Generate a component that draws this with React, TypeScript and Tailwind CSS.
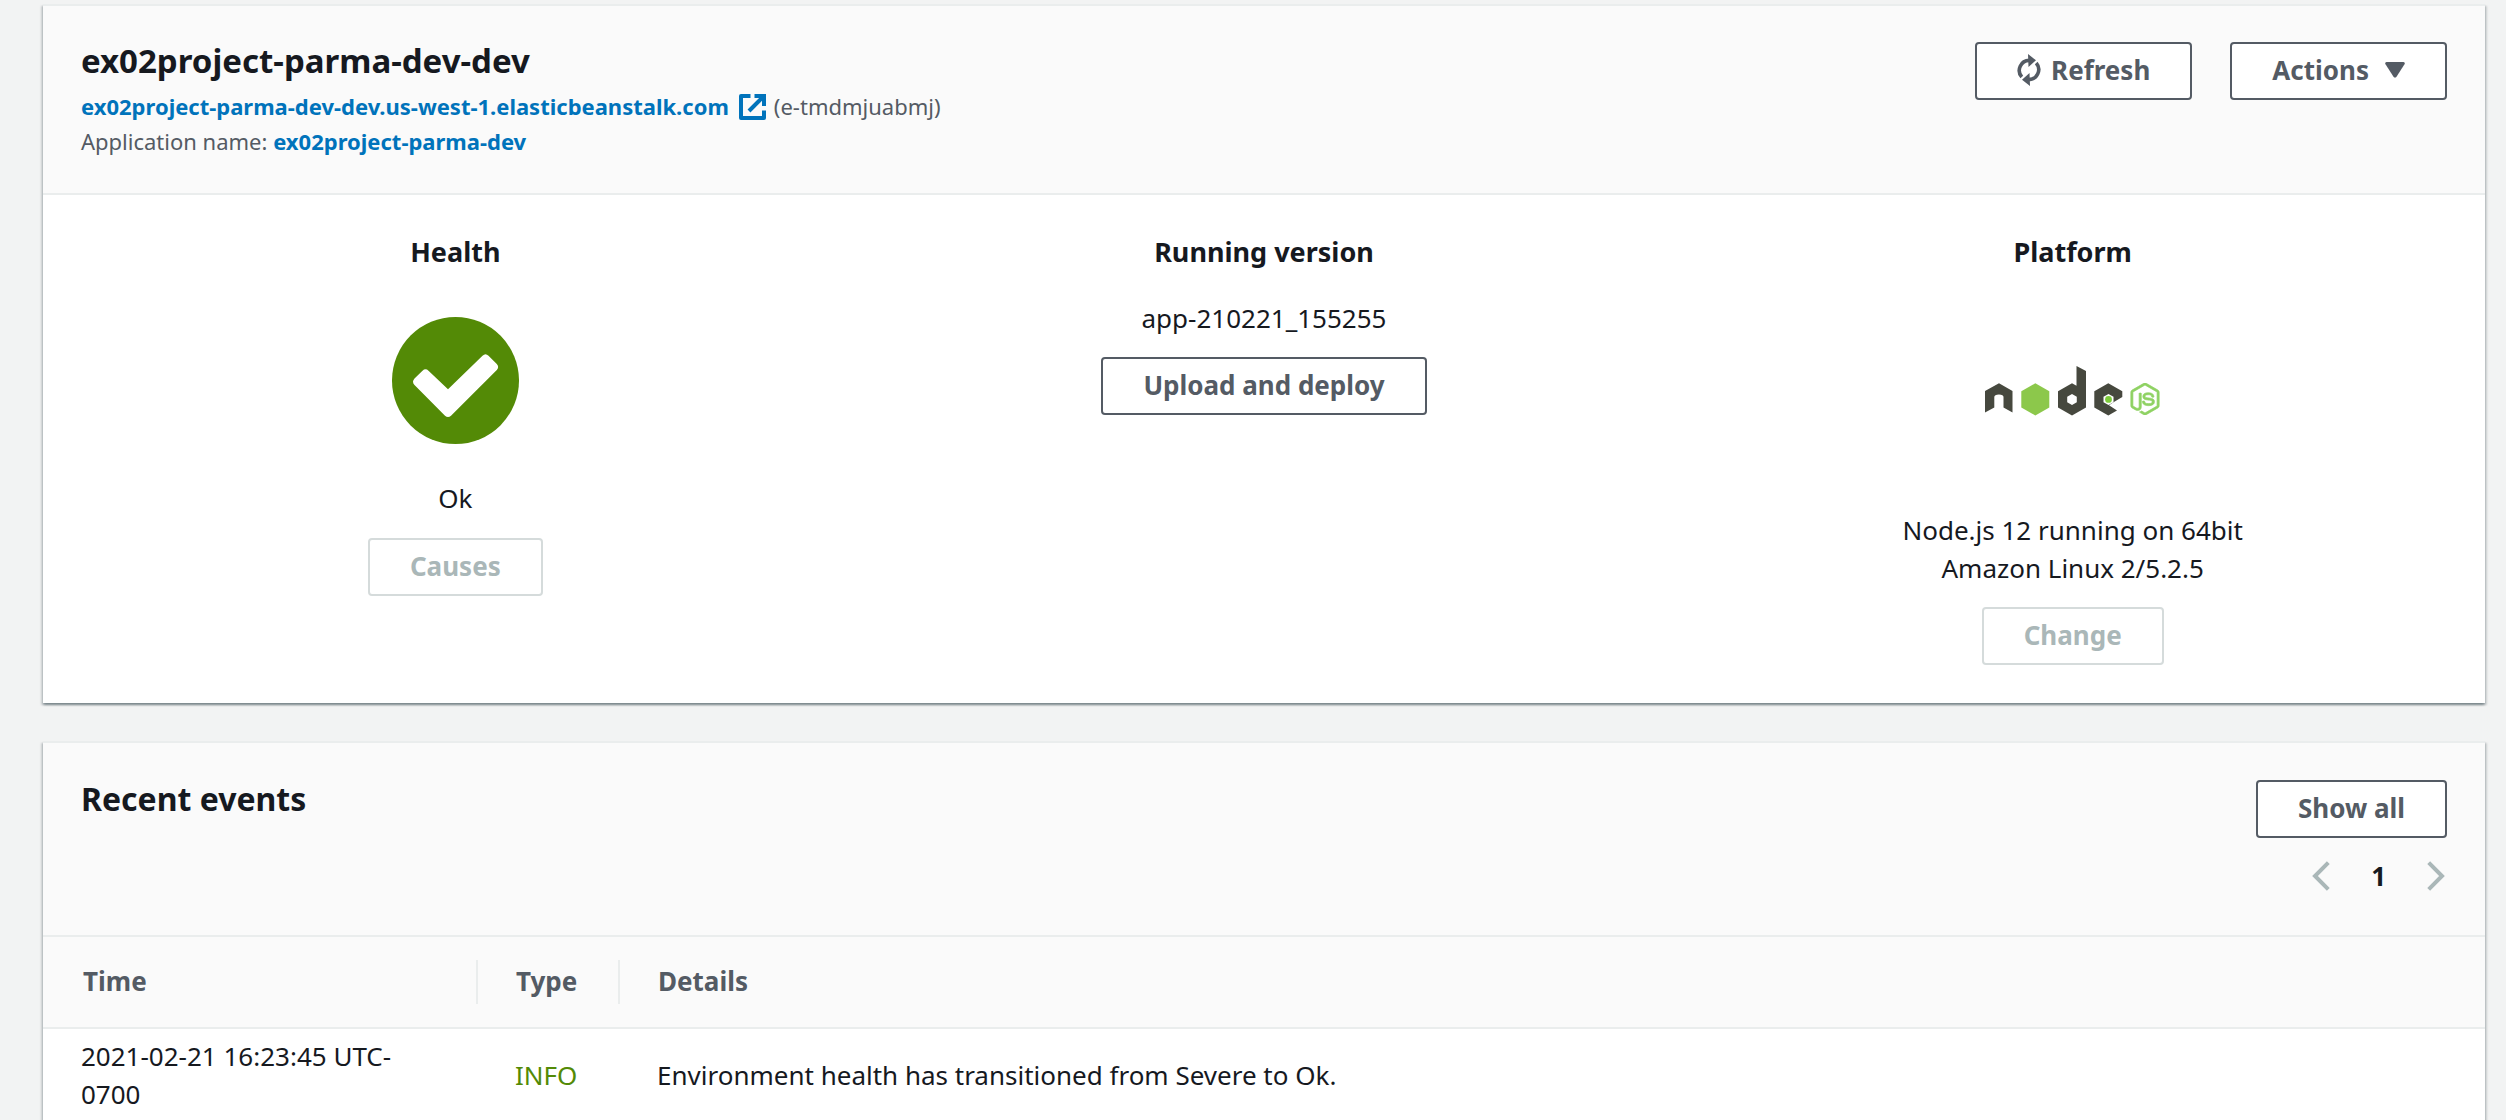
import React from "react";
import { SiNodedotjs } from "react-icons/si";

type ButtonProps = { children: React.ReactNode; disabled?: boolean };

function Button({ children, disabled }: ButtonProps) {
  return (
    <button
      type="button"
      disabled={disabled}
      className="flex h-[58px] items-center rounded border-2 border-[#545b64] bg-white px-10 pb-0.5 text-[26px] leading-[38px] font-bold whitespace-nowrap text-[#545b64] disabled:border-[#d5dbdb] disabled:text-[#aab7b8]"
    >
      {children}
    </button>
  );
}

function Panel({ children, label }: { children: React.ReactNode; label: string }) {
  return (
    <section
      aria-label={label}
      className="border-t-2 border-[#eaeded] bg-white shadow-[0_2px_2px_0_rgba(0,28,36,0.3),2px_2px_2px_0_rgba(0,28,36,0.15),-2px_2px_2px_0_rgba(0,28,36,0.15)]"
    >
      {children}
    </section>
  );
}

function Column({ title, children }: { title: string; children: React.ReactNode }) {
  return (
    <div className="flex flex-col items-center text-center">
      <h2 className="mb-7 text-[27px] leading-[38px] font-bold">{title}</h2>
      {children}
    </div>
  );
}

function ExternalIcon() {
  return (
    <svg className="h-[26px] w-[27px]" viewBox="0 0 27 26" fill="none" stroke="currentColor" aria-hidden="true">
      <path d="M11.5 2H2v22h23v-7.5" strokeWidth="4" strokeLinejoin="round" />
      <path d="M15.5 2H25v10" strokeWidth="4" />
      <path d="M10 17L24 3" strokeWidth="4" />
    </svg>
  );
}

function RefreshIcon() {
  return (
    <svg className="h-8 w-6" viewBox="0 0 24 32" aria-hidden="true">
      <g fill="none" stroke="currentColor" strokeWidth="3.6">
        <path d="M4.800 23A10 10 0 0 1 12.500 6.400" />
        <path d="M19.200 9A10 10 0 0 1 11.500 25.600" />
      </g>
      <path d="M11 0L19 6.300L11.500 13Z M13 32L5 25.700L12.500 19Z" fill="currentColor" />
    </svg>
  );
}

function HealthIcon() {
  return (
    <svg className="size-[127px]" viewBox="0 0 127 127" role="img" aria-label="Healthy">
      <circle cx="63.5" cy="63.5" r="63.5" fill="#538a06" />
      <path
        d="M22.5 61.5l8-7.8q3-2.7 6 0L56 72.2l34.5-33.5q3-3 6 0l8.3 8.3q2.7 3 0 6L59 98.7q-3 2.8-6 0L22.5 68q-3-3.2 0-6.5z"
        fill="#fff"
      />
    </svg>
  );
}

function NodeLogo() {
  return (
    <div className="relative mt-[61px] mb-[91px] h-[60px] w-[176px]" role="img" aria-label="Node.js">
      <svg className="h-[60px] w-[176px]" viewBox="0 0 176 60" aria-hidden="true">
        <g fill="#46483e">
          <path d="M0 31L14 23.3L27.5 31V52.5L18.5 47.5V37Q18.5 34.5 14 34.5Q9.3 34.5 9.3 37V47.5L0 52.5Z" />
          <path
            fillRule="evenodd"
            d="M91.5 6L101 11V47.5L87 55.5L73 47.5V31.3L87 23.3L91.5 25.8ZM87 34L82.2 36.8V42.2L87 45L91.8 42.2V36.8Z"
          />
          <path d="M123.3 23.3L137.3 31.3V37L128.5 42.2L124 45.2L132 50.5L123.3 55.5L109.3 47.5V31.3Z" />
        </g>
        <path d="M50.3 23.3L64.3 31.3V47.5L50.3 55.5L36.3 47.5V31.3Z" fill="#8cc84b" />
        <path d="M123.5 34L128.5 36.8V42.2L123.5 45L118.500 42.200V36.800Z" fill="#fff" />
        <circle cx="123.5" cy="39.4" r="3.4" fill="#7dcb3a" />
      </svg>
      <SiNodedotjs className="absolute top-[23px] left-[144px] size-8 stroke-[#8fd263] stroke-[0.5px] text-[#8fd263]" aria-hidden="true" />
    </div>
  );
}

function Chevron({ direction }: { direction: "left" | "right" }) {
  return (
    <svg className="h-[30px] w-[18px]" viewBox="0 0 18 30" fill="none" stroke="currentColor" strokeWidth="4" aria-hidden="true">
      <path d={direction === "left" ? "M16.3 1.6L3 15L16.3 28.4" : "M1.7 1.6L15 15L1.7 28.4"} />
    </svg>
  );
}

const events = [
  { time: ["2021-02-21 16:23:45 UTC-", "0700"], type: "INFO", details: "Environment health has transitioned from Severe to Ok." },
];

export default function App() {
  return (
    <main className="flex h-screen flex-col gap-[38px] overflow-hidden bg-[#f2f3f3] pt-1 pr-[21px] pl-[43px] font-['Noto_Sans','Open_Sans',sans-serif] text-[26px] leading-[38px] text-[#16191f]">
      <Panel label="Environment overview">
        <header className="flex items-start justify-between border-b-2 border-[#eaeded] bg-[#fafafa] px-[38px] pb-[34px] text-[22px] leading-[35px] text-[#545b64]">
          <div className="pt-[33px]">
            <h1 className="mb-[6px] text-[33px] leading-[44px] font-bold text-[#16191f]">ex02project-parma-dev-dev</h1>
            <div className="flex items-center gap-2">
              <a href="#environment" className="flex items-center gap-2.5 font-bold text-[#0073bb]">
                ex02project-parma-dev-dev.us-west-1.elasticbeanstalk.com
                <ExternalIcon />
              </a>
              <span>(e-tmdmjuabmj)</span>
            </div>
            <p>
              Application name:{" "}
              <a href="#application" className="font-bold text-[#0073bb]">ex02project-parma-dev</a>
            </p>
          </div>
          <div className="flex gap-[38px] pt-[36px]">
            <Button>
              <span className="flex items-center gap-2.5">
                <RefreshIcon />
                Refresh
              </span>
            </Button>
            <Button>
              <span className="flex items-center gap-4">
                Actions
                <svg className="h-4 w-5" viewBox="0 0 20 18" preserveAspectRatio="none" fill="currentColor" aria-hidden="true">
                  <path d="M1.5 0H18.5Q20.5 .5 19.5 2.5L11.5 16.5Q10 18.5 8.5 16.5L.5 2.5Q-.5 .5 1.5 0Z" />
                </svg>
              </span>
            </Button>
          </div>
        </header>
        <div className="grid grid-cols-3 gap-[60px] px-[38px] pt-[38px] pb-[38px]">
          <Column title="Health">
            <div className="mt-[18px] mb-[35px]"><HealthIcon /></div>
            <p className="mb-[21px]">Ok</p>
            <Button disabled>Causes</Button>
          </Column>
          <Column title="Running version">
            <p className="mb-5">app-210221_155255</p>
            <Button>Upload and deploy</Button>
          </Column>
          <Column title="Platform">
            <NodeLogo />
            <p className="mb-5 max-w-[380px]">Node.js 12 running on 64bit Amazon Linux 2/5.2.5</p>
            <Button disabled>Change</Button>
          </Column>
        </div>
      </Panel>

      <Panel label="Recent events">
        <header className="flex items-start justify-between bg-[#fafafa] px-[38px] pb-[40px]">
          <h2 className="pt-[34px] text-[32px] leading-[44px] font-bold">Recent events</h2>
          <div className="flex flex-col items-end gap-[19px] pt-[37px]">
            <Button>Show all</Button>
            <nav aria-label="Pagination" className="flex h-[38px] items-center gap-[41px] pr-0.5 text-[#aab7b8]">
              <button type="button" aria-label="Previous page" disabled><Chevron direction="left" /></button>
              <button type="button" aria-current="page" className="font-bold text-[#16191f]">1</button>
              <button type="button" aria-label="Next page" disabled><Chevron direction="right" /></button>
            </nav>
          </div>
        </header>
        <table className="w-full table-fixed text-left">
          <colgroup>
            <col className="w-[435px]" />
            <col className="w-[142px]" />
            <col />
          </colgroup>
          <thead className="border-y-2 border-[#eaeded] bg-[#fafafa] text-[#545b64]">
            <tr>
              <th scope="col" className="py-[23px] font-bold"><div className="border-r-2 border-[#eaeded] pt-0.5 pb-1 pl-10">Time</div></th>
              <th scope="col" className="py-[23px] font-bold"><div className="border-r-2 border-[#eaeded] pt-0.5 pb-1 pl-[38px]">Type</div></th>
              <th scope="col" className="py-[23px] font-bold"><div className="pt-0.5 pb-1 pl-[38px]">Details</div></th>
            </tr>
          </thead>
          <tbody>
            {events.map((event) => (
              <tr key={event.time[0]}>
                <td className="px-[38px] py-2">{event.time[0]}<wbr />{event.time[1]}</td>
                <td className="py-2 pl-[37px] text-[#538a06]">{event.type}</td>
                <td className="px-[37px] py-2">{event.details}</td>
              </tr>
            ))}
          </tbody>
        </table>
      </Panel>
    </main>
  );
}
